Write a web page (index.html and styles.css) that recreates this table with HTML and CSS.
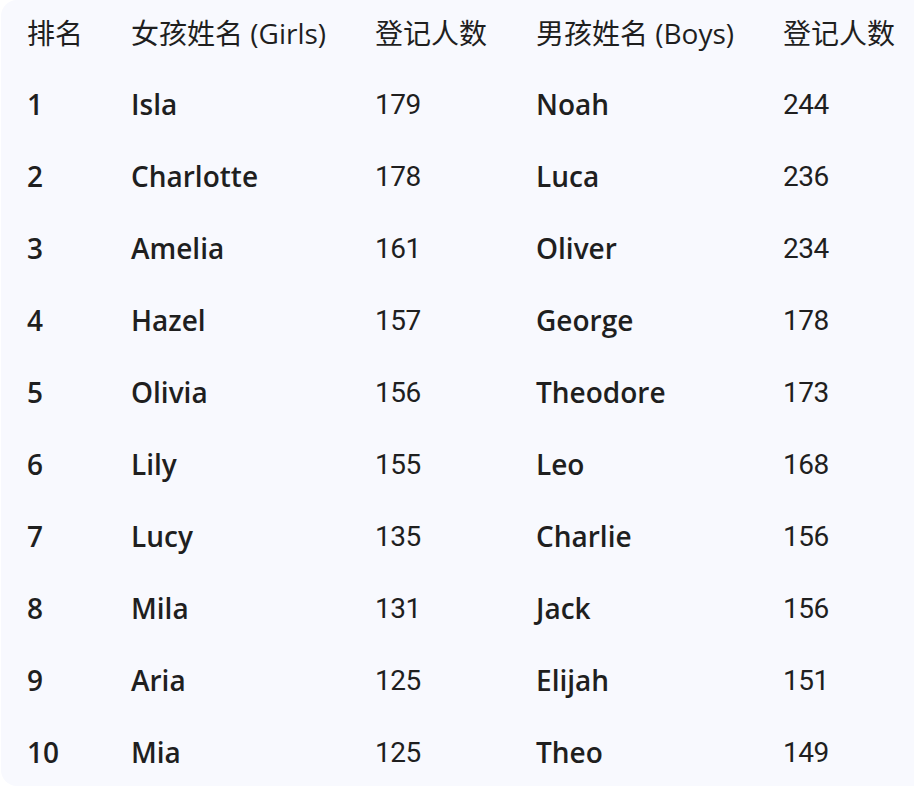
FILE: index.html
```html
<!DOCTYPE html>
<html lang="zh">
<head>
<meta charset="utf-8">
<title>Names</title>
<link rel="stylesheet" href="styles.css">
</head>
<body>
<div class="panel">
  <table class="names">
    <thead>
      <tr><th class="c1">排名</th><th class="c2">女孩姓名 (Girls)</th><th class="c3">登记人数</th><th class="c4">男孩姓名 (Boys)</th><th class="c5">登记人数</th></tr>
    </thead>
    <tbody>
      <tr><td class="rank">1</td><td class="name">Isla</td><td class="num">179</td><td class="name">Noah</td><td class="num">244</td></tr>
      <tr><td class="rank">2</td><td class="name">Charlotte</td><td class="num">178</td><td class="name">Luca</td><td class="num">236</td></tr>
      <tr><td class="rank">3</td><td class="name">Amelia</td><td class="num">161</td><td class="name">Oliver</td><td class="num">234</td></tr>
      <tr><td class="rank">4</td><td class="name">Hazel</td><td class="num">157</td><td class="name">George</td><td class="num">178</td></tr>
      <tr><td class="rank">5</td><td class="name">Olivia</td><td class="num">156</td><td class="name">Theodore</td><td class="num">173</td></tr>
      <tr><td class="rank">6</td><td class="name">Lily</td><td class="num">155</td><td class="name">Leo</td><td class="num">168</td></tr>
      <tr><td class="rank">7</td><td class="name">Lucy</td><td class="num">135</td><td class="name">Charlie</td><td class="num">156</td></tr>
      <tr><td class="rank">8</td><td class="name">Mila</td><td class="num">131</td><td class="name">Jack</td><td class="num">156</td></tr>
      <tr><td class="rank">9</td><td class="name">Aria</td><td class="num">125</td><td class="name">Elijah</td><td class="num">151</td></tr>
      <tr><td class="rank">10</td><td class="name">Mia</td><td class="num">125</td><td class="name">Theo</td><td class="num">149</td></tr>
    </tbody>
  </table>
</div>
</body>
</html>
```
FILE: styles.css
```css
html, body {
  margin: 0;
  padding: 0;
  background: #ffffff;
}
body {
  font-family: "Open Sans", "Noto Sans CJK SC", sans-serif;
  color: #1f1f1f;
  overflow: hidden;
}
.panel {
  margin-left: 1px;
  width: 940px;
  height: 786px;
  background: #f8f9fe;
  border-radius: 16px;
  box-sizing: border-box;
  padding: 0 0 0 26px;
}
.names {
  border-collapse: collapse;
  table-layout: fixed;
  width: 900px;
}
.c1 { width: 104px; }
.c2 { width: 244px; }
.c3 { width: 161px; }
.c4 { width: 247px; }
.c5 { width: 144px; }
th, td {
  text-align: left;
  padding: 0;
  font-size: 28px;
  line-height: 38px;
  white-space: nowrap;
  vertical-align: middle;
}
th {
  font-weight: 400;
  height: 68px;
  line-height: 66px;
  padding-bottom: 2px;
  box-sizing: border-box;
}
td {
  height: 72px;
}
.rank, .name {
  font-weight: 600;
}
.num {
  font-family: Roboto, "Open Sans", sans-serif;
  font-weight: 400;
  letter-spacing: -0.5px;
  padding-top: 2px;
  box-sizing: border-box;
}
```
